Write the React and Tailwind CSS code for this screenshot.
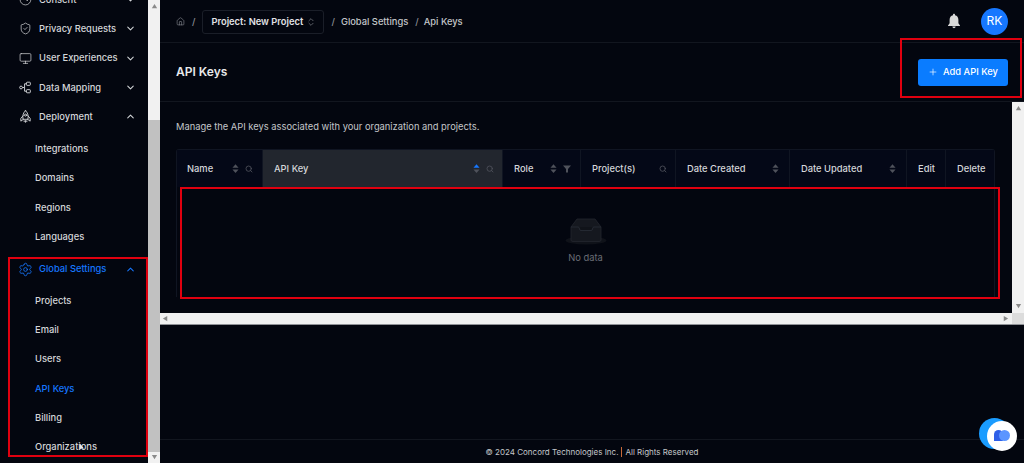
import { Home, ChevronsUpDown, ChevronDown, ChevronUp, ShieldCheck, Monitor, Settings, Search, Plus, Clock } from 'lucide-react';

const DEPLOY_ITEMS = ['Integrations', 'Domains', 'Regions', 'Languages'];
const GLOBAL_ITEMS = ['Projects', 'Email', 'Users', 'API Keys', 'Billing', 'Organizations'];

function MappingIcon({ className }) {
  return (
    <svg className={className} viewBox="0 0 14 14" fill="none" stroke="currentColor" strokeWidth="1">
      <circle cx="2.2" cy="7" r="1.5" />
      <path d="M3.7 7h2.3M6 7V3h2M6 7v4h2" />
      <rect x="8" y="1.3" width="4.2" height="3.4" rx="0.8" />
      <rect x="8" y="9.3" width="4.2" height="3.4" rx="0.8" />
    </svg>
  );
}

function RocketIcon({ className }) {
  return (
    <svg className={className} viewBox="0 0 14 14" fill="none" stroke="currentColor" strokeWidth="1" strokeLinejoin="round" strokeLinecap="round">
      <path d="M7 .8C9.5 2.8 10.2 5.6 9.7 10H4.3C3.8 5.6 4.5 2.8 7 .8Z" />
      <path d="M4.4 6.2 2 9v3l2.5-1.8M9.6 6.2 12 9v3l-2.5-1.8" />
      <circle cx="7" cy="5.5" r="1.1" />
      <path d="M5.6 11.6v1M7 11.4v1.8M8.4 11.6v1" />
    </svg>
  );
}

function NavRow({ icon: Icon, label, open, active, iconCls = 'h-[13px] w-[13px]' }) {
  const Chevron = open ? ChevronUp : ChevronDown;
  return (
    <div className={`flex h-[29.3px] items-center pl-[19px] pr-[12px] text-[9.33px] font-medium ${active ? 'text-[#1677ff]' : 'text-[#d5d7da]'}`}>
      <span className="flex w-[20px] shrink-0">
        <Icon className={iconCls} strokeWidth={1.3} />
      </span>
      <span className="flex-1 whitespace-nowrap">{label}</span>
      <Chevron className="h-[11px] w-[11px]" strokeWidth={2.2} />
    </div>
  );
}

function SubRow({ label, active }) {
  return (
    <div className={`flex h-[29.3px] items-center pl-[35px] text-[9.33px] font-medium ${active ? 'text-[#1677ff]' : 'text-[#d5d7da]'}`}>
      {label}
    </div>
  );
}

function ScrollArrow({ dir, className = '' }) {
  const points = { up: '4,1 7,6 1,6', down: '1,1 7,1 4,6', left: '6,1 6,7 1,4', right: '2,1 2,7 7,4' };
  return (
    <svg className={`h-[7px] w-[7px] ${className}`} viewBox="0 0 8 8" fill="#8a8a8a">
      <polygon points={points[dir]} />
    </svg>
  );
}

function SortIcon({ active }) {
  return (
    <svg className="h-[11px] w-[7px] shrink-0" viewBox="0 0 8 11">
      <polygon points="4,0.5 7.5,4.5 0.5,4.5" fill={active ? '#1677ff' : '#4f525b'} />
      <polygon points="0.5,6.5 7.5,6.5 4,10.5" fill="#4f525b" />
    </svg>
  );
}

function SearchIcon() {
  return <Search className="h-[8px] w-[8px] shrink-0 text-[#4f525b]" strokeWidth={2.5} />;
}

function FilterIcon() {
  return (
    <svg className="h-[8px] w-[8px] shrink-0" viewBox="0 0 8 8">
      <polygon points="0,0.5 8,0.5 5,4 5,7.5 3,7.5 3,4" fill="#4f525b" />
    </svg>
  );
}

function HeadCell({ label, width, sort, search, filter, active, pad = 'pl-[11px] pr-[10px]', last }) {
  return (
    <div style={{ width }} className={`flex h-full shrink-0 items-center ${pad} ${active ? 'bg-[#22262e]' : ''} ${last ? '' : 'border-r border-[#101522]'}`}>
      <span className="flex-1 whitespace-nowrap text-[9.33px] font-medium text-[#d5d7da]">{label}</span>
      <span className="flex items-center gap-[6px]">
        {sort && <SortIcon active={active} />}
        {search && <SearchIcon />}
        {filter && <FilterIcon />}
      </span>
    </div>
  );
}

function EmptyBox() {
  return (
    <svg className="h-[27px] w-[42px]" viewBox="0 0 42 27">
      <ellipse cx="21" cy="22.5" rx="20.5" ry="4" fill="#0f1219" />
      <path d="M6 9 L12 1 H30 L36 9 V22 Q36 23.5 34 23.5 H8 Q6 23.5 6 22 Z" fill="#15181f" stroke="#23262f" strokeWidth="0.8" />
      <path d="M6 9 H13 Q14.5 9 14.5 11 Q14.5 12.5 16 12.5 H26 Q27.5 12.5 27.5 11 Q27.5 9 29 9 H36" fill="#101319" stroke="#2a2e38" strokeWidth="0.8" />
    </svg>
  );
}

function RedBox({ className }) {
  return <div className={`pointer-events-none absolute border-2 border-[#e0000f] ${className}`} />;
}

export default function App() {
  return (
    <div className="relative flex h-[463px] w-[1024px] overflow-hidden bg-[#03060f] font-['Inter',sans-serif]">
      {/* Sidebar */}
      <aside className="flex h-full w-[148px] shrink-0 flex-col overflow-hidden bg-[#03060f] pt-[14px]">
        <div className="-mt-[29px] shrink-0">
          <NavRow icon={Clock} label="Consent" />
        </div>
        <NavRow icon={ShieldCheck} label="Privacy Requests" />
        <NavRow icon={Monitor} label="User Experiences" />
        <NavRow icon={MappingIcon} label="Data Mapping" />
        <NavRow icon={RocketIcon} label="Deployment" open />
        <div className="mt-[3px]">
          {DEPLOY_ITEMS.map(i => <SubRow key={i} label={i} />)}
        </div>
        <div className="mt-[3px]">
          <NavRow icon={Settings} label="Global Settings" open active iconCls="-ml-[1px] h-[15px] w-[15px]" />
        </div>
        <div className="mt-[2px]">
          {GLOBAL_ITEMS.map(i => <SubRow key={i} label={i} active={i === 'API Keys'} />)}
        </div>
      </aside>

      {/* Sidebar scrollbar */}
      <div className="flex h-full w-[12px] shrink-0 flex-col bg-[#f1f1f1]">
        <div className="flex h-[12px] items-center justify-center"><ScrollArrow dir="up" /></div>
        <div className="mt-[108px] h-[332px] bg-[#c1c1c1]" />
        <div className="flex h-[11px] items-center justify-center"><ScrollArrow dir="down" /></div>
      </div>

      {/* Main */}
      <main className="flex h-full min-w-0 flex-1 flex-col">
        <header className="flex h-[43px] shrink-0 items-center border-b border-[#12161f] pl-[16px] pr-[16px] pt-[1px] text-[9.33px] font-medium text-[#c4c6ca]">
          <Home className="h-[9px] w-[9px] text-[#8a8d93]" strokeWidth={1.6} />
          <span className="ml-[7px] text-[#8a8d93]">/</span>
          <div className="ml-[7px] flex h-[24px] w-[122px] items-center rounded-[3px] border border-[#1a1e28] pl-[8px] font-semibold text-[#e2e3e6]">
            <span className="whitespace-nowrap">Project: New Project</span>
            <ChevronsUpDown className="ml-[3px] h-[10px] w-[10px] text-[#8a8d93]" strokeWidth={1.5} />
          </div>
          <span className="ml-[7px] text-[#8a8d93]">/</span>
          <span className="ml-[6px]">Global Settings</span>
          <span className="ml-[7px] text-[#8a8d93]">/</span>
          <span className="ml-[5px]">Api Keys</span>
          <div className="-mt-[1px] ml-auto flex items-center gap-[20px]">
            <svg className="h-[16px] w-[14px]" viewBox="0 0 14 16" fill="#d9d9d9">
              <path d="M7 0.8c-.6 0-1 .4-1 1v.5C3.8 2.8 2.6 4.6 2.6 6.8v3.4L1 12.4v.6h12v-.6l-1.6-2.2V6.8c0-2.2-1.2-4-3.4-4.5v-.5c0-.6-.4-1-1-1zM5.4 13.6c.1.9.8 1.6 1.6 1.6s1.5-.7 1.6-1.6z" />
            </svg>
            <div className="flex h-[27px] w-[27px] items-center justify-center rounded-full bg-[#1677ff] text-[12px] font-normal text-white">RK</div>
          </div>
        </header>

        <div className="flex h-[59px] shrink-0 items-center justify-between border-b border-[#12161f] pl-[16px] pr-[16px]">
          <h1 className="text-[12px] font-semibold text-[#e8e9eb]">API Keys</h1>
          <button className="flex h-[27px] w-[90px] items-center justify-center gap-[5px] rounded-[3px] bg-[#0a7cff] text-[9.33px] font-medium text-white">
            <Plus className="h-[10px] w-[10px]" strokeWidth={1.6} />
            Add API Key
          </button>
        </div>

        <div className="flex h-[211px] shrink-0">
          <div className="min-w-0 flex-1 pl-[16px] pt-[18px]">
            <p className="text-[9.33px] font-normal leading-[13px] text-[#c4c6ca]">Manage the API keys associated with your organization and projects.</p>
            <div className="mt-[16px] h-[148px] w-[819px] rounded-t-[3px] border-x border-t border-[#101522]">
              <div className="flex h-[37px] bg-[#040817]">
                <HeadCell label="Name" width={86} sort search pad="pl-[10px] pr-[9px]" />
                <HeadCell label="API Key" width={240} sort search active pad="pl-[11px] pr-[8px]" />
                <HeadCell label="Role" width={78} sort filter pad="pl-[11px] pr-[9px]" />
                <HeadCell label="Project(s)" width={95} search pad="pl-[11px] pr-[8px]" />
                <HeadCell label="Date Created" width={114} sort />
                <HeadCell label="Date Updated" width={117} sort />
                <HeadCell label="Edit" width={39} />
                <HeadCell label="Delete" width={48} last />
              </div>
              <div className="flex h-[110px] flex-col items-center pt-[31px]">
                <EmptyBox />
                <span className="mt-[7px] text-[9.33px] leading-[12px] text-[#6a6d75]">No data</span>
              </div>
            </div>
          </div>
          <div className="flex h-full w-[12px] shrink-0 flex-col items-center justify-between bg-[#f1f1f1] py-[3px]">
            <ScrollArrow dir="up" />
            <ScrollArrow dir="down" />
          </div>
        </div>

        <div className="flex h-[12px] shrink-0 items-center justify-between border-b border-[#8f9196] bg-[#f1f1f1] pl-[2px]">
          <ScrollArrow dir="left" />
          <div className="flex h-full items-center">
            <ScrollArrow dir="right" className="mr-[3px]" />
            <div className="h-full w-[12px] bg-[#dcdcdc]" />
          </div>
        </div>

        <div className="flex-1" />

        <footer className="flex h-[24px] shrink-0 items-center justify-center border-t border-[#12161f] text-[8px] font-normal text-[#c4c6ca]">
          <span>© 2024 Concord Technologies Inc.</span>
          <span className="mx-[3px] h-[10px] w-px bg-[#c8693a]" />
          <span>All Rights Reserved</span>
        </footer>
      </main>

      {/* Mouse pointer caught in the shot */}
      <svg className="absolute left-[79px] top-[443px] h-[8px] w-[6px]" viewBox="0 0 6 8" fill="#e8e8e8">
        <polygon points="0.5,0 0.5,7 2.2,5.4 5,5.4" />
      </svg>

      {/* Chat widget over the page */}
      <div className="absolute left-[979px] top-[418px] h-[31px] w-[31px] rounded-full bg-[#1a9cff]" />
      <div className="absolute left-[987px] top-[421px] flex h-[30px] w-[30px] items-center justify-center rounded-full bg-white">
        <div className="relative h-[12px] w-[16px]">
          <div className="absolute left-0 top-0 h-[11px] w-[9px] rounded-t-full rounded-bl-[2px] bg-[#2f5fe8]" />
          <div className="absolute right-0 top-0 h-[11px] w-[11px] rounded-full bg-[#5b95ff]" />
        </div>
      </div>

      {/* Annotation boxes */}
      <RedBox className="left-[8px] top-[257px] h-[200px] w-[140px]" />
      <RedBox className="left-[900px] top-[38px] h-[60px] w-[122px]" />
      <RedBox className="left-[180px] top-[187px] h-[112px] w-[820px]" />
    </div>
  );
}
